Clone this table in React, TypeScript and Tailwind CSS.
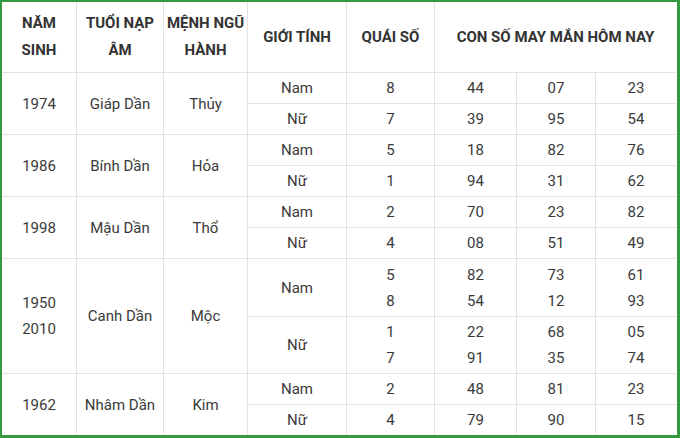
import React from "react";

const B = "border-[#e3e3e3]";

function Cell({
  className = "",
  children,
  right = true,
  bottom = true,
}: {
  className?: string;
  children?: React.ReactNode;
  right?: boolean;
  bottom?: boolean;
}) {
  return (
    <div
      className={`flex flex-col items-center justify-center text-center ${B} ${right ? "border-r" : ""} ${bottom ? "border-b" : ""} ${className}`}
    >
      {children}
    </div>
  );
}

type Sub = { g: string; q: string[]; n: string[][] };
type Row = { year: string[]; tuoi: string; menh: string; subs: Sub[]; rows: string[] };

const data: Row[] = [
  {
    year: ["1974"],
    tuoi: "Giáp Dần",
    menh: "Thủy",
    rows: ["row-span-2"],
    subs: [
      { g: "Nam", q: ["8"], n: [["44"], ["07"], ["23"]] },
      { g: "Nữ", q: ["7"], n: [["39"], ["95"], ["54"]] },
    ],
  },
  {
    year: ["1986"],
    tuoi: "Bính Dần",
    menh: "Hỏa",
    rows: ["row-span-2"],
    subs: [
      { g: "Nam", q: ["5"], n: [["18"], ["82"], ["76"]] },
      { g: "Nữ", q: ["1"], n: [["94"], ["31"], ["62"]] },
    ],
  },
  {
    year: ["1998"],
    tuoi: "Mậu Dần",
    menh: "Thổ",
    rows: ["row-span-2"],
    subs: [
      { g: "Nam", q: ["2"], n: [["70"], ["23"], ["82"]] },
      { g: "Nữ", q: ["4"], n: [["08"], ["51"], ["49"]] },
    ],
  },
  {
    year: ["1950", "2010"],
    tuoi: "Canh Dần",
    menh: "Mộc",
    rows: ["row-span-2"],
    subs: [
      { g: "Nam", q: ["5", "8"], n: [["82", "54"], ["73", "12"], ["61", "93"]] },
      { g: "Nữ", q: ["1", "7"], n: [["22", "91"], ["68", "35"], ["05", "74"]] },
    ],
  },
  {
    year: ["1962"],
    tuoi: "Nhâm Dần",
    menh: "Kim",
    rows: ["row-span-2"],
    subs: [
      { g: "Nam", q: ["2"], n: [["48"], ["81"], ["23"]] },
      { g: "Nữ", q: ["4"], n: [["79"], ["90"], ["15"]] },
    ],
  },
];

export default function App() {
  return (
    <div
      className="w-[680px] h-[438px] bg-white border-l-2 border-t-2 border-r-[3px] border-b-[3px] border-[#34993f] text-[#3a3a3a] text-[15px] leading-[26px]"
      style={{ fontFamily: "Roboto, 'Liberation Sans', sans-serif" }}
    >
      <div className="grid h-full grid-cols-[75px_87px_84px_99px_88px_82px_79px_80px] grid-rows-[71px_31px_31px_31px_31px_31px_31px_58px_57px_31px_30px]">
        <Cell className="font-bold text-[#333] leading-[27px]">
          <span>NĂM</span>
          <span>SINH</span>
        </Cell>
        <Cell className="font-bold text-[#333] leading-[27px]">
          <span>TUỔI NẠP</span>
          <span>ÂM</span>
        </Cell>
        <Cell className="font-bold text-[#333] leading-[27px]">
          <span>MỆNH NGŨ</span>
          <span>HÀNH</span>
        </Cell>
        <Cell className="font-bold text-[#333]">GIỚI TÍNH</Cell>
        <Cell className="font-bold text-[#333]">QUÁI SỐ</Cell>
        <Cell className="col-span-3 font-bold text-[#333]" right={false}>
          CON SỐ MAY MẮN HÔM NAY
        </Cell>
        {data.map((r, i) => {
          const last = i === data.length - 1;
          return (
            <React.Fragment key={r.tuoi}>
              <Cell className="row-span-2" bottom={!last}>
                {r.year.map((y) => (
                  <span key={y}>{y}</span>
                ))}
              </Cell>
              <Cell className="row-span-2" bottom={!last}>
                {r.tuoi}
              </Cell>
              <Cell className="row-span-2" bottom={!last}>
                {r.menh}
              </Cell>
              {r.subs.map((s, j) => {
                const bottom = !(last && j === 1);
                return (
                  <React.Fragment key={s.g}>
                    <Cell bottom={bottom}>{s.g}</Cell>
                    <Cell bottom={bottom}>
                      {s.q.map((q, k) => (
                        <span key={k}>{q}</span>
                      ))}
                    </Cell>
                    {s.n.map((col, c) => (
                      <Cell key={c} bottom={bottom} right={c < 2}>
                        {col.map((v, k) => (
                          <span key={k}>{v}</span>
                        ))}
                      </Cell>
                    ))}
                  </React.Fragment>
                );
              })}
            </React.Fragment>
          );
        })}
      </div>
    </div>
  );
}
